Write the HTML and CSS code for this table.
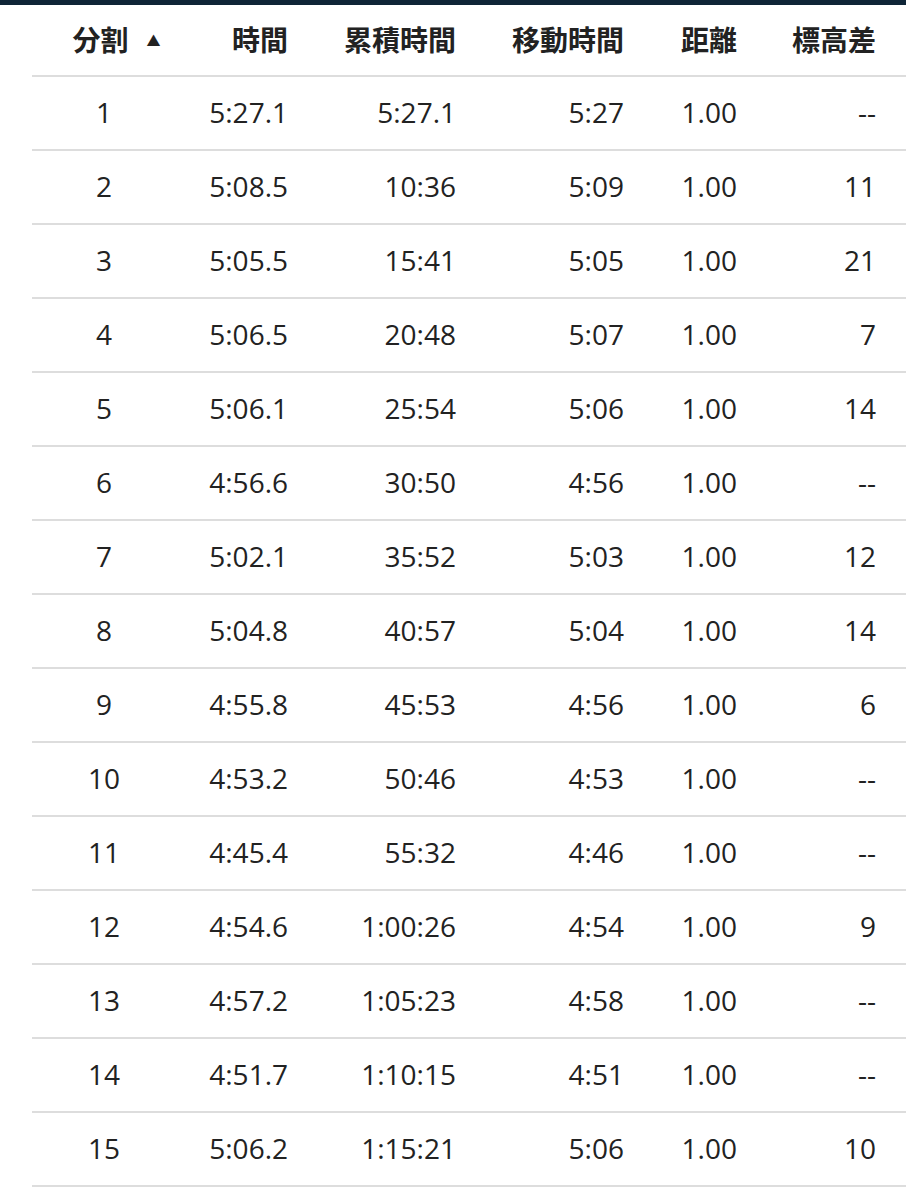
FILE: index.html
```html
<!DOCTYPE html>
<html lang="ja">
<head>
<meta charset="utf-8">
<link rel="stylesheet" href="styles.css">
</head>
<body>
<div class="topbar"></div>
<div class="wrap">
<table class="splits">
<colgroup>
<col class="c1"><col class="c2"><col class="c3"><col class="c4"><col class="c5"><col class="c6">
</colgroup>
<thead>
<tr>
<th class="split">分割<span class="sort">▲</span></th>
<th>時間</th>
<th>累積時間</th>
<th>移動時間</th>
<th>距離</th>
<th class="last">標高差</th>
</tr>
</thead>
<tbody>
<tr><td class="split">1</td><td>5:27.1</td><td>5:27.1</td><td>5:27</td><td>1.00</td><td class="last">--</td></tr>
<tr><td class="split">2</td><td>5:08.5</td><td>10:36</td><td>5:09</td><td>1.00</td><td class="last">11</td></tr>
<tr><td class="split">3</td><td>5:05.5</td><td>15:41</td><td>5:05</td><td>1.00</td><td class="last">21</td></tr>
<tr><td class="split">4</td><td>5:06.5</td><td>20:48</td><td>5:07</td><td>1.00</td><td class="last">7</td></tr>
<tr><td class="split">5</td><td>5:06.1</td><td>25:54</td><td>5:06</td><td>1.00</td><td class="last">14</td></tr>
<tr><td class="split">6</td><td>4:56.6</td><td>30:50</td><td>4:56</td><td>1.00</td><td class="last">--</td></tr>
<tr><td class="split">7</td><td>5:02.1</td><td>35:52</td><td>5:03</td><td>1.00</td><td class="last">12</td></tr>
<tr><td class="split">8</td><td>5:04.8</td><td>40:57</td><td>5:04</td><td>1.00</td><td class="last">14</td></tr>
<tr><td class="split">9</td><td>4:55.8</td><td>45:53</td><td>4:56</td><td>1.00</td><td class="last">6</td></tr>
<tr><td class="split">10</td><td>4:53.2</td><td>50:46</td><td>4:53</td><td>1.00</td><td class="last">--</td></tr>
<tr><td class="split">11</td><td>4:45.4</td><td>55:32</td><td>4:46</td><td>1.00</td><td class="last">--</td></tr>
<tr><td class="split">12</td><td>4:54.6</td><td>1:00:26</td><td>4:54</td><td>1.00</td><td class="last">9</td></tr>
<tr><td class="split">13</td><td>4:57.2</td><td>1:05:23</td><td>4:58</td><td>1.00</td><td class="last">--</td></tr>
<tr><td class="split">14</td><td>4:51.7</td><td>1:10:15</td><td>4:51</td><td>1.00</td><td class="last">--</td></tr>
<tr><td class="split">15</td><td>5:06.2</td><td>1:15:21</td><td>5:06</td><td>1.00</td><td class="last">10</td></tr>
</tbody>
</table>
</div>
</body>
</html>
```
FILE: styles.css
```css
html, body {
  margin: 0;
  padding: 0;
  background: #fff;
}
body {
  font-family: "Open Sans", "Noto Sans CJK JP", sans-serif;
  color: #222;
  overflow: hidden;
}
.topbar {
  height: 5px;
  background: #0f2537;
}
.wrap {
  padding-left: 32px;
}
.splits {
  border-collapse: collapse;
  table-layout: fixed;
  width: 874px;
}
.c1 { width: 144px; }
.c2 { width: 112px; }
.c3 { width: 168px; }
.c4 { width: 168px; }
.c5 { width: 113px; }
.c6 { width: 169px; }
.splits th,
.splits td {
  padding: 0;
  text-align: right;
  white-space: nowrap;
  border-bottom: 2px solid #dddddd;
}
.splits th {
  height: 67px;
  padding-bottom: 3px;
  font-family: "Noto Sans CJK JP", sans-serif;
  font-weight: 700;
  font-size: 28px;
  color: #222;
  vertical-align: middle;
}
.splits td {
  height: 69px;
  padding-bottom: 3px;
  font-size: 28px;
  vertical-align: middle;
}
.splits .split {
  text-align: center;
}
.splits th.split {
  padding-left: 25px;
}
.sort {
  font-size: 14px;
  margin-left: 18px;
  vertical-align: 5px;
}
.splits .last {
  padding-right: 30px;
}
```
